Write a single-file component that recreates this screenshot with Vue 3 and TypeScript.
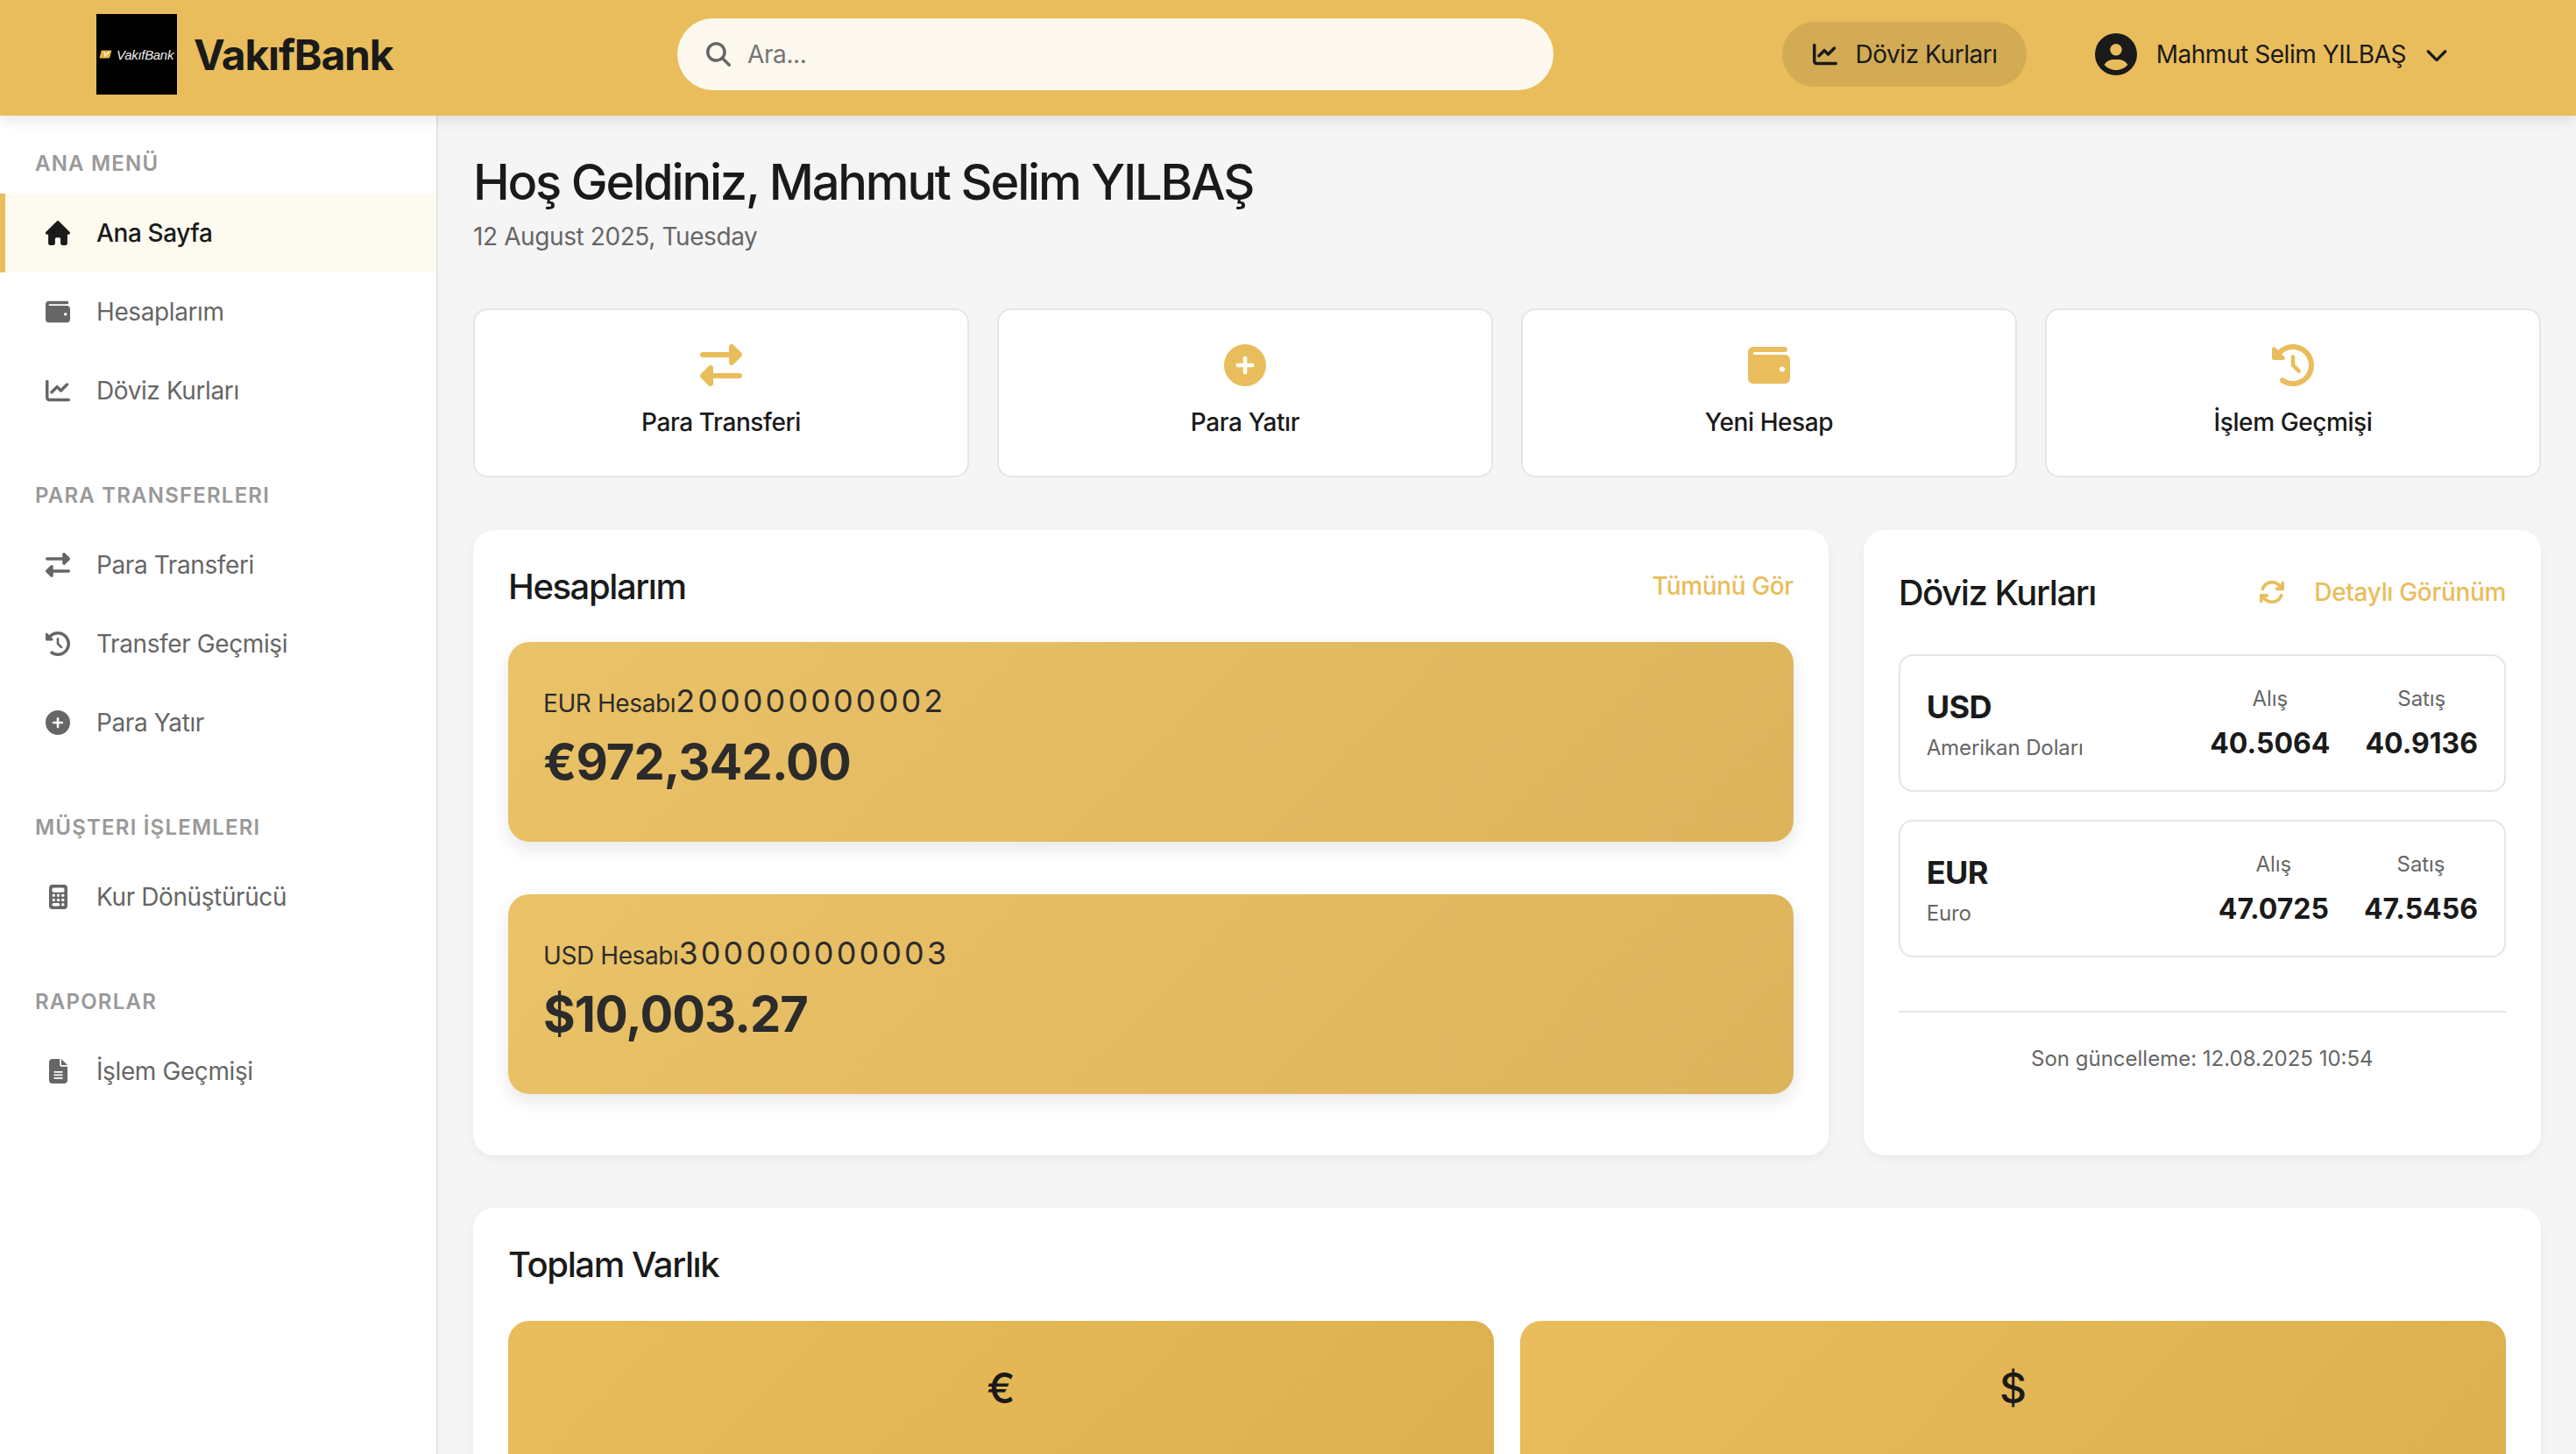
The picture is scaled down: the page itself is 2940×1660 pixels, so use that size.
<template>
  <div class="app">
    <header class="topbar">
      <div class="brand">
        <div class="logo-box">
          <svg class="logo-mark" viewBox="0 0 30 20">
            <path d="M5 1h24l-4 15q-1 3-4 3H1l4-16z" fill="#e9b341" />
            <path d="M12 4l2 10 9-10" fill="none" stroke="#fff" stroke-width="2.4" />
          </svg>
          <span class="logo-text">VakıfBank</span>
        </div>
        <span class="brand-name">VakıfBank</span>
      </div>

      <div class="search">
        <svg class="search-icon" viewBox="0 0 512 512"><path :d="icons.search.d" /></svg>
        <input type="text" placeholder="Ara..." />
      </div>

      <div class="top-actions">
        <button class="rates-btn">
          <svg class="rates-icon" viewBox="0 0 512 512"><path :d="icons.chart.d" /></svg>
          Döviz Kurları
        </button>
        <div class="user-menu">
          <svg class="user-icon" viewBox="0 0 512 512"><path :d="icons.user.d" /></svg>
          <span>Mahmut Selim YILBAŞ</span>
          <svg class="chevron" viewBox="0 0 512 512"><path :d="icons.chevron.d" /></svg>
        </div>
      </div>
    </header>

    <div class="body-row">
      <aside class="sidebar">
        <section v-for="group in navGroups" :key="group.title" class="nav-group">
          <h3>{{ group.title }}</h3>
          <a
            v-for="item in group.items"
            :key="item.label"
            class="nav-item"
            :class="{ active: item.active }"
          >
            <span class="nav-icon">
              <svg
                :viewBox="icons[item.icon].box"
                :style="{ width: icons[item.icon].w * 28 + 'px' }"
                preserveAspectRatio="none"
              >
                <path :d="icons[item.icon].d" />
              </svg>
            </span>
            {{ item.label }}
          </a>
        </section>
      </aside>

      <main class="content">
        <h1>Hoş Geldiniz, Mahmut Selim YILBAŞ</h1>
        <p class="date">12 August 2025, Tuesday</p>

        <div class="quick-actions">
          <div v-for="action in quickActions" :key="action.label" class="quick-card">
            <svg :viewBox="icons[action.icon].box"><path :d="icons[action.icon].d" /></svg>
            <span>{{ action.label }}</span>
          </div>
        </div>

        <div class="two-col">
          <section class="panel">
            <div class="panel-head">
              <h2>Hesaplarım</h2>
              <a class="link">Tümünü Gör</a>
            </div>
            <div class="account-list">
              <div v-for="acc in accounts" :key="acc.number" class="account-card">
                <div class="account-line">
                  <span class="account-name">{{ acc.name }}</span><span class="account-number">{{ acc.number }}</span>
                </div>
                <div class="account-balance">{{ acc.balance }}</div>
              </div>
            </div>
          </section>

          <section class="panel">
            <div class="panel-head rates-head">
              <h2>Döviz Kurları</h2>
              <div class="rates-tools">
                <svg class="sync" viewBox="0 0 512 512"><path :d="icons.sync.d" /></svg>
                <a class="link">Detaylı Görünüm</a>
              </div>
            </div>
            <div v-for="rate in rates" :key="rate.code" class="rate-box">
              <div class="rate-name">
                <strong>{{ rate.code }}</strong>
                <small>{{ rate.name }}</small>
              </div>
              <div class="rate-values">
                <div class="rate-col">
                  <small>Alış</small>
                  <b>{{ rate.buy }}</b>
                </div>
                <div class="rate-col">
                  <small>Satış</small>
                  <b>{{ rate.sell }}</b>
                </div>
              </div>
            </div>
            <div class="rates-foot">Son güncelleme: 12.08.2025 10:54</div>
          </section>
        </div>

        <section class="panel totals">
          <h2>Toplam Varlık</h2>
          <div class="total-grid">
            <div class="total-card">€</div>
            <div class="total-card">$</div>
          </div>
        </section>
      </main>
    </div>
  </div>
</template>

<script setup lang="ts">
interface Icon {
  box: string;
  w: number;
  d: string;
}

const icons: Record<string, Icon> = {
  search: { box: '0 0 512 512', w: 1, d: 'M416 208c0 45.9-14.9 88.3-40 122.7L502.6 457.4c12.5 12.5 12.5 32.8 0 45.3s-32.8 12.5-45.3 0L330.7 376c-34.4 25.2-76.8 40-122.7 40C93.1 416 0 322.9 0 208S93.1 0 208 0S416 93.1 416 208zM208 352a144 144 0 1 0 0-288 144 144 0 1 0 0 288z' },
  house: { box: '0 0 576 512', w: 1, d: 'M575.8 255.5c0 18-15 32.1-32 32.1h-32l.7 160.2c0 2.7-.2 5.4-.5 8.1V472c0 22.1-17.9 40-40 40H456c-1.1 0-2.2 0-3.3-.1c-1.4 .1-2.8 .1-4.2 .1H416 392c-22.1 0-40-17.9-40-40V448 384c0-17.7-14.3-32-32-32H256c-17.7 0-32 14.3-32 32v64 24c0 22.1-17.9 40-40 40H160 128.1c-1.5 0-3-.1-4.5-.2c-1.2 .1-2.4 .2-3.6 .2H104c-22.1 0-40-17.9-40-40V360c0-.9 0-1.9 .1-2.8V287.6H32c-18 0-32-14-32-32.1c0-9 3-17 10-24L266.4 8c7-7 15-8 22-8s15 2 21 7L564.8 231.5c8 7 12 15 11 24z' },
  wallet: { box: '0 0 512 512', w: 1, d: 'M64 32C28.7 32 0 60.7 0 96V416c0 35.3 28.7 64 64 64H448c35.3 0 64-28.7 64-64V192c0-35.3-28.7-64-64-64H80c-8.8 0-16-7.2-16-16s7.2-16 16-16H448c17.7 0 32-14.3 32-32s-14.3-32-32-32H64zM416 272a32 32 0 1 1 0 64 32 32 0 1 1 0-64z' },
  chart: { box: '0 0 512 512', w: 1, d: 'M64 64c0-17.7-14.3-32-32-32S0 46.3 0 64V400c0 44.2 35.8 80 80 80H480c17.7 0 32-14.3 32-32s-14.3-32-32-32H80c-8.8 0-16-7.2-16-16V64zm406.6 86.6c12.5-12.5 12.5-32.8 0-45.3s-32.8-12.5-45.3 0L320 210.7l-57.4-57.4c-12.5-12.5-32.8-12.5-45.3 0l-112 112c-12.5 12.5-12.5 32.8 0 45.3s32.8 12.5 45.3 0L240 221.3l57.4 57.4c12.5 12.5 32.8 12.5 45.3 0l128-128z' },
  transfer: { box: '0 0 512 512', w: 1, d: 'M32 96l320 0V32c0-12.9 7.8-24.6 19.8-29.6s25.7-2.2 34.9 6.9l96 96c6 6 9.4 14.1 9.4 22.6s-3.4 16.6-9.4 22.6l-96 96c-9.2 9.2-22.9 11.9-34.9 6.9s-19.8-16.6-19.8-29.6V160L32 160c-17.7 0-32-14.3-32-32s14.3-32 32-32zM480 352c17.7 0 32 14.3 32 32s-14.3 32-32 32H160v64c0 12.9-7.8 24.6-19.8 29.6s-25.7 2.2-34.9-6.9l-96-96c-6-6-9.4-14.1-9.4-22.6s3.4-16.6 9.4-22.6l96-96c9.2-9.2 22.9-11.9 34.9-6.9s19.8 16.6 19.8 29.6l0 64H480z' },
  plus: { box: '0 0 512 512', w: 1, d: 'M256 512A256 256 0 1 0 256 0a256 256 0 1 0 0 512zM232 344V280H168c-13.3 0-24-10.7-24-24s10.7-24 24-24h64V168c0-13.3 10.7-24 24-24s24 10.7 24 24v64h64c13.3 0 24 10.7 24 24s-10.7 24-24 24H280v64c0 13.3-10.7 24-24 24s-24-10.7-24-24z' },
  history: { box: '0 0 512 512', w: 1, d: 'M75 75L41 41C25.9 25.9 0 36.6 0 57.9V168c0 13.3 10.7 24 24 24H134.1c21.4 0 32.1-25.9 17-41l-30.8-30.8C155 85.5 203 64 256 64c106 0 192 86 192 192s-86 192-192 192c-40.8 0-78.6-12.7-109.7-34.4c-14.5-10.1-34.4-6.6-44.6 7.9s-6.6 34.4 7.9 44.6C151.2 495 201.7 512 256 512c141.4 0 256-114.6 256-256S397.4 0 256 0C185.3 0 121.3 28.7 75 75zm181 53c-13.3 0-24 10.7-24 24V256c0 6.4 2.5 12.5 7 17l72 72c9.4 9.4 24.6 9.4 33.9 0s9.4-24.6 0-33.9l-65-65V152c0-13.3-10.7-24-24-24z' },
  calculator: { box: '0 0 384 512', w: 0.75, d: 'M64 0C28.7 0 0 28.7 0 64V448c0 35.3 28.7 64 64 64H320c35.3 0 64-28.7 64-64V64c0-35.3-28.7-64-64-64H64zM96 64H288c17.7 0 32 14.3 32 32v32c0 17.7-14.3 32-32 32H96c-17.7 0-32-14.3-32-32V96c0-17.7 14.3-32 32-32zm32 160a32 32 0 1 1 -64 0 32 32 0 1 1 64 0zM96 352a32 32 0 1 1 0-64 32 32 0 1 1 0 64zM64 416c0-17.7 14.3-32 32-32h96c17.7 0 32 14.3 32 32s-14.3 32-32 32H96c-17.7 0-32-14.3-32-32zM192 256a32 32 0 1 1 0-64 32 32 0 1 1 0 64zm32 64a32 32 0 1 1 -64 0 32 32 0 1 1 64 0zm64-64a32 32 0 1 1 0-64 32 32 0 1 1 0 64zm32 64a32 32 0 1 1 -64 0 32 32 0 1 1 64 0zM288 448a32 32 0 1 1 0-64 32 32 0 1 1 0 64z' },
  file: { box: '0 0 384 512', w: 0.75, d: 'M64 0C28.7 0 0 28.7 0 64V448c0 35.3 28.7 64 64 64H320c35.3 0 64-28.7 64-64V160H256c-17.7 0-32-14.3-32-32V0H64zM256 0V128H384L256 0zM112 256H272c8.8 0 16 7.2 16 16s-7.2 16-16 16H112c-8.8 0-16-7.2-16-16s7.2-16 16-16zm0 64H272c8.8 0 16 7.2 16 16s-7.2 16-16 16H112c-8.8 0-16-7.2-16-16s7.2-16 16-16zm0 64H272c8.8 0 16 7.2 16 16s-7.2 16-16 16H112c-8.8 0-16-7.2-16-16s7.2-16 16-16z' },
  user: { box: '0 0 512 512', w: 1, d: 'M399 384.2C376.9 345.8 335.4 320 288 320H224c-47.4 0-88.9 25.8-111 64.2c35.2 39.2 86.2 63.8 143 63.8s107.8-24.7 143-63.8zM0 256a256 256 0 1 1 512 0A256 256 0 1 1 0 256zm256 16a72 72 0 1 0 0-144 72 72 0 1 0 0 144z' },
  chevron: { box: '0 0 512 512', w: 1, d: 'M233.4 406.6c12.5 12.5 32.8 12.5 45.3 0l192-192c12.5-12.5 12.5-32.8 0-45.3s-32.8-12.5-45.3 0L256 338.7 86.6 169.4c-12.5-12.5-32.8-12.5-45.3 0s-12.5 32.8 0 45.3l192 192z' },
  sync: { box: '0 0 512 512', w: 1, d: 'M105.1 202.6c7.7-21.8 20.2-42.3 37.8-59.8c62.5-62.5 163.8-62.5 226.3 0L386.3 160H352c-17.7 0-32 14.3-32 32s14.3 32 32 32H463.5c0 0 0 0 0 0h.4c17.7 0 32-14.3 32-32V80c0-17.7-14.3-32-32-32s-32 14.3-32 32v35.2L414.4 97.6c-87.5-87.5-229.3-87.5-316.8 0C73.2 122 55.6 150.7 44.8 181.4c-5.9 16.7 2.9 34.9 19.5 40.8s34.9-2.9 40.8-19.5zM39 289.3c-5 1.5-9.8 4.2-13.7 8.2c-4 4-6.7 8.8-8.1 14c-.3 1.2-.6 2.5-.8 3.8c-.3 1.7-.4 3.4-.4 5.1V432c0 17.7 14.3 32 32 32s32-14.3 32-32V396.9l17.6 17.5 0 0c87.5 87.4 229.3 87.4 316.7 0c24.4-24.4 42.1-53.1 52.9-83.7c5.9-16.7-2.9-34.9-19.5-40.8s-34.9 2.9-40.8 19.5c-7.7 21.8-20.2 42.3-37.8 59.8c-62.5 62.5-163.8 62.5-226.3 0l-.1-.1L125.6 352H160c17.7 0 32-14.3 32-32s-14.3-32-32-32H48.4c-1.6 0-3.2 .1-4.8 .3s-3.1 .5-4.6 1z' },
};

const navGroups = [
  {
    title: 'ANA MENÜ',
    items: [
      { label: 'Ana Sayfa', icon: 'house', active: true },
      { label: 'Hesaplarım', icon: 'wallet' },
      { label: 'Döviz Kurları', icon: 'chart' },
    ],
  },
  {
    title: 'PARA TRANSFERLERI',
    items: [
      { label: 'Para Transferi', icon: 'transfer' },
      { label: 'Transfer Geçmişi', icon: 'history' },
      { label: 'Para Yatır', icon: 'plus' },
    ],
  },
  {
    title: 'MÜŞTERI İŞLEMLERI',
    items: [{ label: 'Kur Dönüştürücü', icon: 'calculator' }],
  },
  {
    title: 'RAPORLAR',
    items: [{ label: 'İşlem Geçmişi', icon: 'file' }],
  },
];

const quickActions = [
  { label: 'Para Transferi', icon: 'transfer' },
  { label: 'Para Yatır', icon: 'plus' },
  { label: 'Yeni Hesap', icon: 'wallet' },
  { label: 'İşlem Geçmişi', icon: 'history' },
];

const accounts = [
  { name: 'EUR Hesabı', number: '200000000002', balance: '€972,342.00' },
  { name: 'USD Hesabı', number: '300000000003', balance: '$10,003.27' },
];

const rates = [
  { code: 'USD', name: 'Amerikan Doları', buy: '40.5064', sell: '40.9136' },
  { code: 'EUR', name: 'Euro', buy: '47.0725', sell: '47.5456' },
];
</script>

<style>
html,
body {
  margin: 0;
  overflow: hidden;
}
</style>

<style scoped>
* {
  box-sizing: border-box;
}

.app {
  height: 100vh;
  display: flex;
  flex-direction: column;
  font-family: Inter, 'Noto Sans', sans-serif;
  letter-spacing: -0.4px;
  color: #1a1a1a;
  background: #f5f5f5;
}

/* top bar */
.topbar {
  height: 132px;
  flex-shrink: 0;
  display: flex;
  align-items: center;
  padding: 0 146px 8px 110px;
  background: #e9bd5b;
  box-shadow: 0 4px 16px rgba(0, 0, 0, 0.1);
  position: relative;
  z-index: 2;
}

.brand {
  display: flex;
  align-items: center;
  gap: 19px;
  width: 336px;
}

.logo-box {
  width: 92px;
  height: 92px;
  flex-shrink: 0;
  background: #000;
  display: flex;
  align-items: center;
  padding-left: 3px;
  gap: 5px;
  overflow: hidden;
}

.logo-mark {
  width: 15px;
  height: 10px;
  flex-shrink: 0;
}

.logo-text {
  font-family: 'Liberation Sans', sans-serif;
  font-style: italic;
  font-size: 15px;
  letter-spacing: -0.3px;
  color: #eee;
}

.brand-name {
  font-size: 48px;
  font-weight: 700;
  letter-spacing: -1.2px;
}

.search {
  width: 1000px;
  height: 82px;
  margin-left: 327px;
  border-radius: 41px;
  background: #fdf8ee;
  display: flex;
  align-items: center;
  padding: 0 33px;
  gap: 17px;
}

.search-icon {
  width: 28px;
  height: 28px;
  fill: #666;
  flex-shrink: 0;
}

.search input {
  flex: 1;
  border: none;
  outline: none;
  background: transparent;
  font: inherit;
  font-size: 28px;
  letter-spacing: -0.4px;
  color: #1a1a1a;
}

.search input::placeholder {
  color: #757575;
}

.top-actions {
  margin-left: auto;
  display: flex;
  align-items: center;
  gap: 78px;
}

.rates-btn {
  height: 74px;
  padding: 0 33px 0 35px;
  border: none;
  border-radius: 37px;
  background: #d2ab54;
  display: flex;
  align-items: center;
  gap: 21px;
  font: inherit;
  font-size: 28px;
  letter-spacing: -0.45px;
  color: #1a1a1a;
}

.rates-icon {
  width: 28px;
  height: 28px;
  fill: #1a1a1a;
}

.user-menu {
  display: flex;
  align-items: center;
  gap: 22px;
  font-size: 28px;
  letter-spacing: -0.45px;
}

.user-icon {
  width: 48px;
  height: 48px;
  fill: #1a1a1a;
}

.chevron {
  width: 26px;
  height: 26px;
  fill: #1a1a1a;
}

/* sidebar */
.body-row {
  flex: 1;
  min-height: 0;
  display: flex;
}

.sidebar {
  width: 500px;
  flex-shrink: 0;
  background: #fff;
  border-right: 2px solid #e5e5e5;
  padding-top: 40px;
}

.nav-group {
  margin-bottom: 60px;
}

.nav-group h3 {
  margin: 0 0 20px;
  padding-left: 40px;
  font-size: 24px;
  line-height: 29px;
  font-weight: 600;
  letter-spacing: 1.2px;
  color: #999;
}

.nav-item {
  height: 90px;
  display: flex;
  align-items: center;
  gap: 29px;
  padding-left: 51px;
  font-size: 28px;
  color: #666;
}

.nav-item.active {
  background: #fdfbf0;
  box-shadow: inset 6px 0 0 #e9bd5b;
  color: #1a1a1a;
  font-weight: 500;
}

.nav-icon {
  width: 30px;
  height: 28px;
  display: flex;
  align-items: center;
  justify-content: center;
}

.nav-icon svg {
  height: 28px;
  fill: currentColor;
}

/* main */
.content {
  flex: 1;
  min-width: 0;
  padding: 40px;
  overflow: hidden;
}

h1 {
  margin: 0 0 9px;
  font-size: 56px;
  line-height: 72px;
  font-weight: 500;
  letter-spacing: -2.2px;
}

.date {
  margin: 0 0 65px;
  font-size: 28px;
  line-height: 34px;
  color: #666;
}

.quick-actions {
  display: grid;
  grid-template-columns: repeat(4, 1fr);
  gap: 32px;
  margin-bottom: 60px;
}

.quick-card {
  height: 193px;
  background: #fff;
  border: 2px solid #e5e5e5;
  border-radius: 16px;
  display: flex;
  flex-direction: column;
  align-items: center;
  padding-top: 39px;
  gap: 24px;
  font-size: 28px;
  font-weight: 500;
}

.quick-card svg {
  width: 48px;
  height: 48px;
  fill: #e9bd5b;
}

.two-col {
  display: grid;
  grid-template-columns: 2fr 1fr;
  gap: 40px;
  margin-bottom: 60px;
}

.panel {
  background: #fff;
  border-radius: 24px;
  padding: 40px;
  box-shadow: 0 4px 12px rgba(0, 0, 0, 0.05);
}

.panel-head {
  display: flex;
  align-items: center;
  justify-content: space-between;
  height: 48px;
  margin-bottom: 40px;
}

h2 {
  margin: 0;
  font-size: 40px;
  font-weight: 500;
  letter-spacing: -1.4px;
}

.link {
  font-size: 28px;
  font-weight: 500;
  color: #e9bd5b;
}

.account-list {
  display: flex;
  flex-direction: column;
  gap: 60px;
  padding-bottom: 30px;
}

.account-card {
  height: 228px;
  padding: 45px 40px 0;
  border-radius: 24px;
  background: linear-gradient(135deg, #e9bd5b, #dbae4f);
  box-shadow: 0 8px 20px rgba(0, 0, 0, 0.1);
  opacity: 0.92;
}

.account-line {
  display: flex;
  align-items: baseline;
  margin-bottom: 14px;
}

.account-name {
  font-size: 28px;
}

.account-number {
  font-size: 36px;
  letter-spacing: 3.1px;
}

.account-balance {
  font-size: 56px;
  font-weight: 700;
  letter-spacing: -0.9px;
}

.rates-head {
  height: 62px;
}

.rates-tools {
  display: flex;
  align-items: center;
  gap: 33px;
}

.rates-tools .link {
  letter-spacing: -0.33px;
}

.sync {
  width: 30px;
  height: 30px;
  fill: #e9bd5b;
}

.rate-box {
  height: 157px;
  margin-bottom: 32px;
  padding: 0 30px;
  border: 2px solid #e5e5e5;
  border-radius: 16px;
  display: flex;
  align-items: center;
  justify-content: space-between;
}

.rate-name {
  display: flex;
  flex-direction: column;
  gap: 10px;
  padding-top: 2px;
}

.rate-name strong {
  font-size: 36px;
  font-weight: 700;
  letter-spacing: -0.5px;
}

.rate-name small,
.rate-col small {
  font-size: 24px;
  letter-spacing: -0.1px;
  color: #666;
}

.rate-values {
  display: flex;
  gap: 40px;
}

.rate-col {
  display: flex;
  flex-direction: column;
  align-items: center;
  gap: 17px;
}

.rate-col b {
  font-size: 32px;
  font-weight: 700;
  letter-spacing: 0;
}

.rates-foot {
  margin-top: 61px;
  padding-top: 38px;
  border-top: 2px solid #e5e5e5;
  text-align: center;
  font-size: 24px;
  letter-spacing: 0;
  color: #666;
}

.totals h2 {
  margin-bottom: 40px;
}

.total-grid {
  display: grid;
  grid-template-columns: 1fr 1fr;
  gap: 30px;
}

.total-card {
  height: 300px;
  padding-top: 47px;
  border-radius: 24px;
  background: linear-gradient(135deg, #e9bd5b, #dbae4f);
  text-align: center;
  font-size: 48px;
  font-weight: 500;
  letter-spacing: 0;
}
</style>
